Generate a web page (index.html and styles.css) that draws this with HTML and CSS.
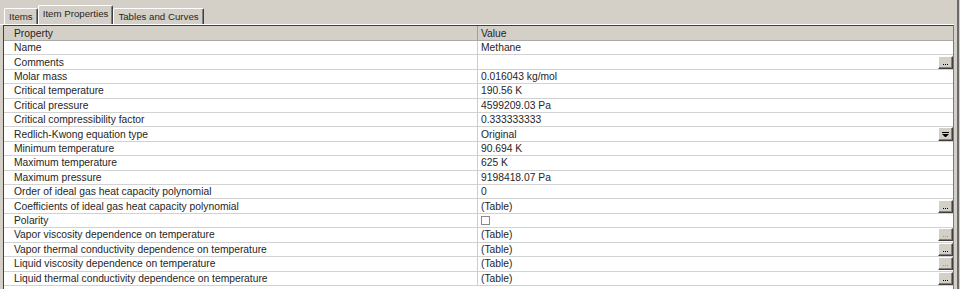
FILE: index.html
```html
<!DOCTYPE html>
<html lang="en">
<head>
    <meta charset="UTF-8">
    <title>Item Properties</title>
    <link rel="stylesheet" href="styles.css">
</head>
<body>
    <div class="window">
        <div class="panel">
            <div class="tabs">
                <div class="tab">Items</div>
                <div class="tab active">Item Properties</div>
                <div class="tab">Tables and Curves</div>
            </div>
            <div class="page">
                <div class="grid">
                    <div class="row head"><div class="prop">Property</div><div class="val">Value</div></div>
                    <div class="row"><div class="prop">Name</div><div class="val"><span class="txt">Methane</span></div></div>
                    <div class="row"><div class="prop">Comments</div><div class="val"><span class="txt"></span><span class="btn"><svg width="5" height="1"><rect x="0" width="1" height="1"/><rect x="2" width="1" height="1"/><rect x="4" width="1" height="1"/></svg></span></div></div>
                    <div class="row"><div class="prop">Molar mass</div><div class="val"><span class="txt">0.016043 kg/mol</span></div></div>
                    <div class="row"><div class="prop">Critical temperature</div><div class="val"><span class="txt">190.56 K</span></div></div>
                    <div class="row"><div class="prop">Critical pressure</div><div class="val"><span class="txt">4599209.03 Pa</span></div></div>
                    <div class="row"><div class="prop">Critical compressibility factor</div><div class="val"><span class="txt">0.333333333</span></div></div>
                    <div class="row"><div class="prop">Redlich-Kwong equation type</div><div class="val"><span class="txt">Original</span><span class="btn combo"><svg width="7" height="5"><rect x="0" y="0" width="7" height="1"/><polygon points="0,2 7,2 3.5,5.5"/></svg></span></div></div>
                    <div class="row"><div class="prop">Minimum temperature</div><div class="val"><span class="txt">90.694 K</span></div></div>
                    <div class="row"><div class="prop">Maximum temperature</div><div class="val"><span class="txt">625 K</span></div></div>
                    <div class="row"><div class="prop">Maximum pressure</div><div class="val"><span class="txt">9198418.07 Pa</span></div></div>
                    <div class="row"><div class="prop">Order of ideal gas heat capacity polynomial</div><div class="val"><span class="txt">0</span></div></div>
                    <div class="row"><div class="prop">Coefficients of ideal gas heat capacity polynomial</div><div class="val"><span class="txt">(Table)</span><span class="btn"><svg width="5" height="1"><rect x="0" width="1" height="1"/><rect x="2" width="1" height="1"/><rect x="4" width="1" height="1"/></svg></span></div></div>
                    <div class="row"><div class="prop">Polarity</div><div class="val"><span class="check"></span></div></div>
                    <div class="row"><div class="prop">Vapor viscosity dependence on temperature</div><div class="val"><span class="txt">(Table)</span><span class="btn dim"><svg width="5" height="1"><rect x="0" width="1" height="1"/><rect x="2" width="1" height="1"/><rect x="4" width="1" height="1"/></svg></span></div></div>
                    <div class="row"><div class="prop">Vapor thermal conductivity dependence on temperature</div><div class="val"><span class="txt">(Table)</span><span class="btn"><svg width="5" height="1"><rect x="0" width="1" height="1"/><rect x="2" width="1" height="1"/><rect x="4" width="1" height="1"/></svg></span></div></div>
                    <div class="row"><div class="prop">Liquid viscosity dependence on temperature</div><div class="val"><span class="txt">(Table)</span><span class="btn dim"><svg width="5" height="1"><rect x="0" width="1" height="1"/><rect x="2" width="1" height="1"/><rect x="4" width="1" height="1"/></svg></span></div></div>
                    <div class="row"><div class="prop">Liquid thermal conductivity dependence on temperature</div><div class="val"><span class="txt">(Table)</span><span class="btn"><svg width="5" height="1"><rect x="0" width="1" height="1"/><rect x="2" width="1" height="1"/><rect x="4" width="1" height="1"/></svg></span></div></div>
                </div>
            </div>
        </div>
        <div class="edge"></div>
    </div>
</body>
</html>
```

FILE: styles.css
```css
html, body {
    overflow: hidden;
}
body {
    margin: 0;
    background: #d4d0c8;
    font-family: "Liberation Sans", Arial, sans-serif;
    color: #262626;
    height: 289px;
}
.window {
    display: flex;
    height: 289px;
}
.panel {
    width: 954px;
    flex: none;
    display: flex;
    flex-direction: column;
}
.edge {
    width: 2px;
    margin-left: 3px;
    background: #6a6a6a;
}

/* tab strip */
.tabs {
    display: flex;
    align-items: flex-end;
    height: 24px;
    flex: none;
    padding-left: 4px;
    box-sizing: border-box;
}
.tab {
    font-size: 9.7px;
    height: 16px;
    line-height: 15px;
    padding: 0 4px;
    box-sizing: border-box;
    border-top: 1px solid #fff;
    border-left: 1px solid #fff;
    border-right: 1px solid #404040;
    border-radius: 2px 2px 0 0;
    box-shadow: inset -1px 0 #808080;
    white-space: nowrap;
}
.tab.active {
    height: 19px;
    line-height: 16px;
}

/* property grid */
.page {
    flex: 1;
    min-height: 0;
    border-top: 1px solid #fff;
    padding-left: 3px;
    display: flex;
}
.grid {
    width: 951px;
    box-sizing: border-box;
    overflow: hidden;
    background: #fff;
    border-top: 1px solid #404040;
    border-left: 1px solid #404040;
    border-right: 1px solid #7a7a7a;
}
.row {
    display: flex;
    height: 14.42px;
    box-sizing: border-box;
    border-bottom: 1px solid #d2d2d2;
    font-size: 10.3px;
}
.row.head {
    height: 15px;
    background: #d4d0c8;
    border-bottom: 1px solid #a9a9a9;
}
.prop {
    width: 474px;
    flex: none;
    box-sizing: border-box;
    padding-left: 10px;
    border-right: 1px solid #cdcdcd;
    display: flex;
    align-items: center;
    white-space: nowrap;
}
.head .prop {
    border-right-color: #a0a0a0;
}
.val {
    flex: 1;
    display: flex;
    align-items: center;
    padding-left: 3px;
    white-space: nowrap;
}
.txt {
    flex: 1;
}
.btn {
    width: 15px;
    height: 13px;
    box-sizing: border-box;
    background: #d4d0c8;
    border-top: 1px solid #fff;
    border-left: 1px solid #fff;
    border-right: 1px solid #404040;
    border-bottom: 1px solid #404040;
    box-shadow: inset -1px -1px #808080;
    display: flex;
    align-items: flex-end;
    justify-content: center;
    padding-bottom: 3px;
}
.btn svg {
    display: block;
    fill: #000;
}
.btn.dim svg {
    fill: #9a9a9a;
}
.btn.combo {
    height: 14px;
    align-items: center;
    padding-bottom: 0;
}
.check {
    width: 9px;
    height: 9px;
    box-sizing: border-box;
    border: 1px solid #8a8a8a;
    background: #fff;
}
```
